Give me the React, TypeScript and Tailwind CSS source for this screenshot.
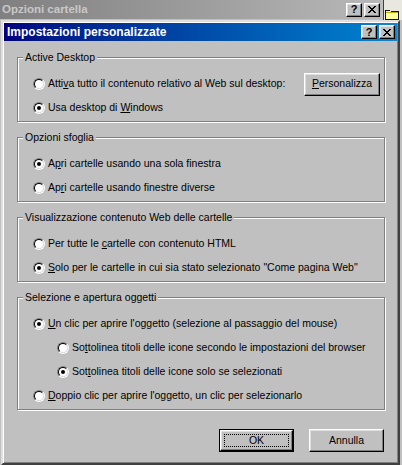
const FONT = "font-['Liberation_Sans',Arial,sans-serif]";

function Radio({ checked }: { checked?: boolean }) {
  return (
    <span className="w-[12px] h-[12px] shrink-0 rounded-full border border-t-[#808080] border-l-[#808080] border-r-white border-b-white">
      <span className="flex items-center justify-center w-full h-full rounded-full border border-t-black border-l-black border-r-[#dfdfdf] border-b-[#dfdfdf] bg-white">
        {checked && <span className="w-[4px] h-[4px] rounded-full bg-black" />}
      </span>
    </span>
  );
}

function U({ children }: { children: string }) {
  return <span className="underline underline-offset-[1px]">{children}</span>;
}

function Row({ checked, indent, children, right }: { checked?: boolean; indent?: boolean; children: React.ReactNode; right?: React.ReactNode }) {
  return (
    <div className={`h-[24px] flex items-center ${indent ? "pl-[39px]" : "pl-[15px]"}`}>
      <Radio checked={checked} />
      <span className="ml-[3px] whitespace-nowrap">{children}</span>
      {right}
    </div>
  );
}

function Group({ title, children, className = "" }: { title: string; children: React.ReactNode; className?: string }) {
  return (
    <div className={`flex flex-col border border-[#808080] shadow-[inset_1px_1px_0_#fff,1px_1px_0_#fff] pb-[1px] ${className}`}>
      <div className="-mt-[7px] ml-[5px] self-start bg-[#c0c0c0] px-[2px] h-[13px] leading-[13px]">{title}</div>
      <div className="mt-[8px] flex flex-col">{children}</div>
    </div>
  );
}

function Bevel({ className = "", children }: { className?: string; children?: React.ReactNode }) {
  return (
    <div className={`flex items-center justify-center bg-[#c0c0c0] border border-t-white border-l-white border-r-black border-b-black shadow-[inset_-1px_-1px_0_#808080,inset_1px_1px_0_#dfdfdf] ${className}`}>
      {children}
    </div>
  );
}

function CloseGlyph() {
  return (
    <svg width="8" height="7" viewBox="0 0 8 7" shapeRendering="crispEdges">
      <path d="M0 0h2v1h-2zM6 0h2v1h-2zM1 1h2v1h-2zM5 1h2v1h-2zM2 2h4v1h-4zM3 3h2v1h-2zM2 4h4v1h-4zM1 5h2v1h-2zM5 5h2v1h-2zM0 6h2v1h-2zM6 6h2v1h-2z" fill="#000" />
    </svg>
  );
}

function TitleButtons() {
  return (
    <div className="flex items-center gap-[2px]">
      <Bevel className="w-[16px] h-[14px]">
        <span className="font-bold text-[11px] leading-none text-black">?</span>
      </Bevel>
      <Bevel className="w-[16px] h-[14px]">
        <CloseGlyph />
      </Bevel>
    </div>
  );
}

function Folder() {
  return (
    <svg width="16" height="13" viewBox="0 0 16 13" shapeRendering="crispEdges">
      <path d="M0.5 2.5h5l1 1h8v9h-14z" fill="#ffff9c" stroke="#000" />
      <path d="M1.5 4.5h13" stroke="#c0a000" />
    </svg>
  );
}

export default function App() {
  return (
    <div className={`w-[402px] h-[465px] overflow-hidden bg-[#c0c0c0] text-[10.5px] text-black ${FONT}`}>
      {/* window behind */}
      <div className="flex h-[20px]">
        <div className="w-[381px] h-[19px] flex items-center justify-between pl-[2px] pr-[1px] bg-gradient-to-r from-[#808080] to-[#b8b8b8]">
          <span className="font-bold text-[11.5px] text-[#c8c8c8] leading-none">Opzioni cartella</span>
          <TitleButtons />
        </div>
        <div className="w-[3px] border-r border-[#404040] bg-[#c0c0c0]" />
        <div className="flex-1 flex flex-col bg-[#e8e8e0] pt-[8px]">
          <Folder />
        </div>
      </div>

      {/* dialog */}
      <div className="ml-[1px] w-[399px] h-[445px] flex flex-col border-2 border-t-[#dfdfdf] border-l-[#dfdfdf] border-r-[#404040] border-b-[#404040] shadow-[inset_1px_1px_0_#fff,inset_-1px_-1px_0_#808080]">
        <div className="mx-[1px] mt-[1px] h-[18px] flex items-center justify-between pl-[3px] pr-[2px] bg-gradient-to-r from-[#000080] to-[#1084d0]">
          <span className="font-bold text-[12px] text-white leading-none">Impostazioni personalizzate</span>
          <TitleButtons />
        </div>

        <div className="flex flex-col pl-[14px] mt-[16px] w-[382px]">
          <Group title="Active Desktop">
            <Row
              right={
                <Bevel className="ml-auto mr-[4px] w-[76px] h-[23px]">
                  <span><U>P</U>ersonalizza</span>
                </Bevel>
              }
            >
              Atti<U>v</U>a tutto il contenuto relativo al Web sul desktop:
            </Row>
            <Row checked>
              Usa desktop di <U>W</U>indows
            </Row>
          </Group>

          <Group title="Opzioni sfoglia" className="mt-[15px]">
            <Row checked>
              A<U>p</U>ri cartelle usando una sola finestra
            </Row>
            <Row>
              Ap<U>r</U>i cartelle usando finestre diverse
            </Row>
          </Group>

          <Group title="Visualizzazione contenuto Web delle cartelle" className="mt-[15px]">
            <Row>
              Per tutte le <U>c</U>artelle con contenuto HTML
            </Row>
            <Row checked>
              <U>S</U>olo per le cartelle in cui sia stato selezionato "Come pagina Web"
            </Row>
          </Group>

          <Group title="Selezione e apertura oggetti" className="mt-[15px]">
            <Row checked>
              <U>U</U>n clic per aprire l'oggetto (selezione al passaggio del mouse)
            </Row>
            <Row indent>
              So<U>t</U>tolinea titoli delle icone secondo le impostazioni del browser
            </Row>
            <Row indent checked>
              Sot<U>t</U>olinea titoli delle icone solo se selezionati
            </Row>
            <Row>
              <U>D</U>oppio clic per aprire l'oggetto, un clic per selezionarlo
            </Row>
          </Group>

          <div className="mt-[19px] flex justify-end gap-[15px] pr-[1px]">
            <div className="w-[75px] h-[23px] flex border border-black">
              <Bevel className="flex-1 p-[3px]">
                <div className="w-full h-full flex items-center justify-center border border-dotted border-black">OK</div>
              </Bevel>
            </div>
            <Bevel className="w-[75px] h-[23px]">Annulla</Bevel>
          </div>
        </div>
      </div>
    </div>
  );
}
